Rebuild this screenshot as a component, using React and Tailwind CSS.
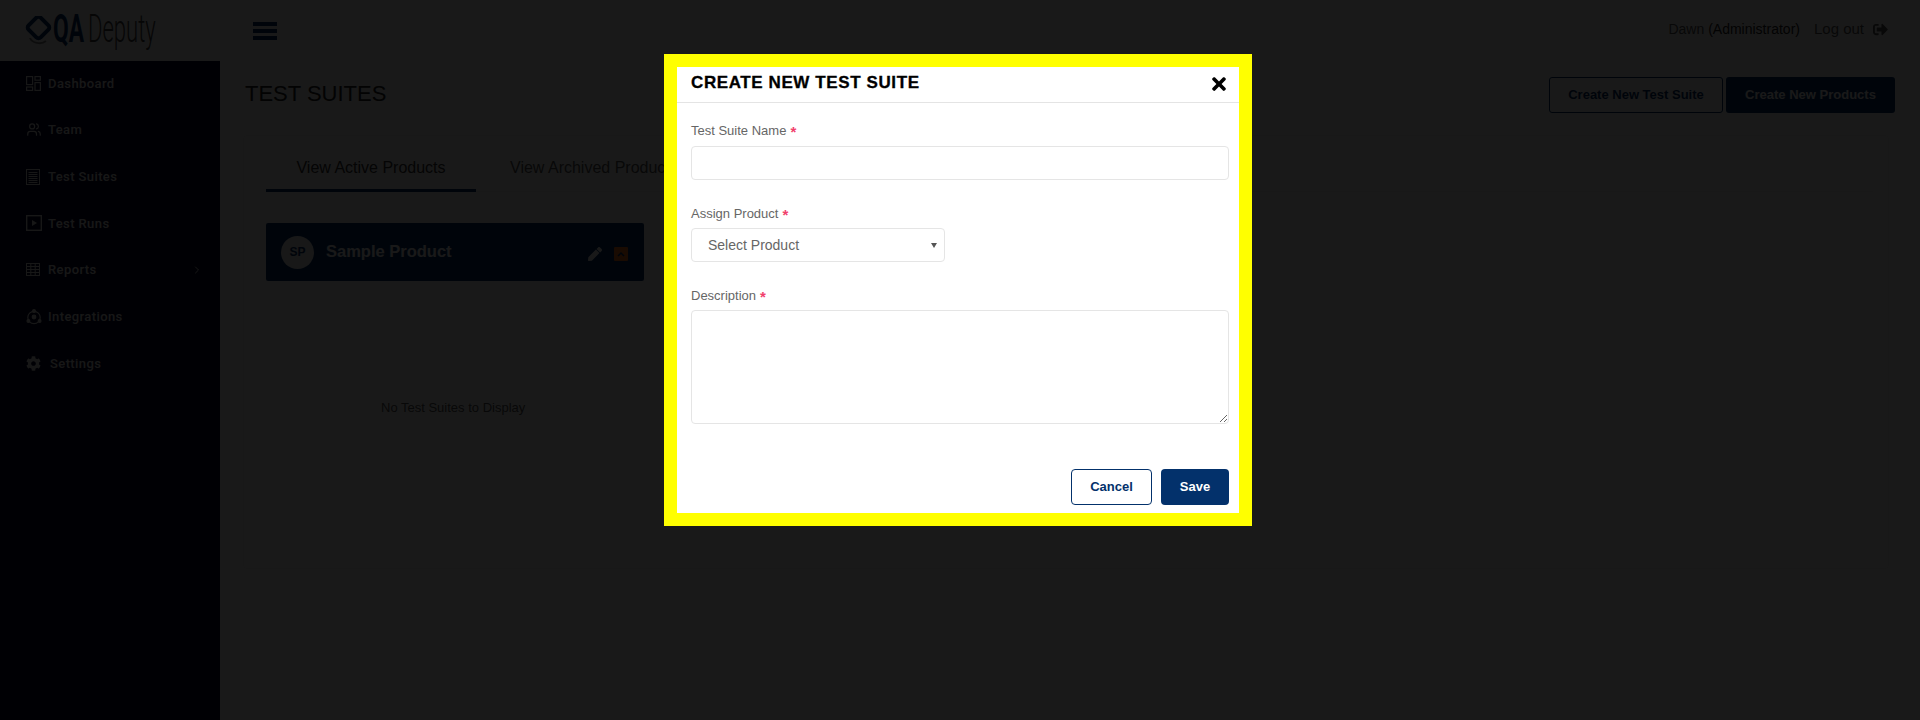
import React from "react";
import { Users, ChevronRight } from "lucide-react";
import { FaCog, FaPen, FaTimes, FaSignOutAlt } from "react-icons/fa";

const sans = "font-['Liberation_Sans',Arial,sans-serif]";

function DashIcon() {
  return (
    <svg viewBox="0 0 15 15" className="w-[15px] h-[15px]" fill="none" stroke="currentColor" strokeWidth="1.2">
      <rect x="0.6" y="0.6" width="6" height="8" />
      <rect x="9" y="0.6" width="5.4" height="3.6" />
      <rect x="0.6" y="11" width="6" height="3.4" />
      <rect x="9" y="6.6" width="5.4" height="7.8" />
    </svg>
  );
}
function DocIcon() {
  return (
    <svg viewBox="0 0 14 16" className="w-[14px] h-[16px]" fill="none" stroke="currentColor" strokeWidth="1">
      <rect x="0.5" y="0.5" width="13" height="15" />
      <path d="M2.5 3.5h9M2.5 5.5h9M2.5 7.5h9M2.5 9.5h9M2.5 11.5h9M2.5 13.5h9" />
    </svg>
  );
}
function PlayIcon() {
  return (
    <svg viewBox="0 0 16 16" className="w-[16px] h-[16px]" fill="none" stroke="currentColor" strokeWidth="1.4">
      <rect x="0.7" y="0.7" width="14.6" height="14.6" />
      <path d="M6 5l5 3-5 3z" fill="currentColor" stroke="none" />
    </svg>
  );
}
function GridIcon() {
  return (
    <svg viewBox="0 0 14 13" className="w-[14px] h-[13px]" fill="none" stroke="currentColor" strokeWidth="1">
      <rect x="0.5" y="0.5" width="13" height="12" />
      <path d="M0 3.5h14M0 6.5h14M0 9.5h14M4.8 0v13M9.2 0v13" />
    </svg>
  );
}
function IntegrationsIcon() {
  return (
    <svg viewBox="0 0 16 16" className="w-4 h-4" fill="none" stroke="currentColor" strokeWidth="1.2">
      <circle cx="8" cy="8.5" r="6.2" />
      <circle cx="8" cy="8" r="1.8" fill="currentColor" />
      <circle cx="8" cy="2" r="1.4" fill="currentColor" />
      <circle cx="2.4" cy="12" r="1.4" fill="currentColor" />
      <circle cx="13.6" cy="12" r="1.4" fill="currentColor" />
    </svg>
  );
}

const items = [
  ["Dashboard", <DashIcon />],
  ["Team", <Users className="w-[17px] h-[15px]" />],
  ["Test Suites", <DocIcon />],
  ["Test Runs", <PlayIcon />],
  ["Reports", <GridIcon />],
  ["Integrations", <IntegrationsIcon />],
  ["Settings", <FaCog className="w-[15px] h-[15px]" />],
];

function Req() {
  return <span className="inline-block translate-y-[2px] text-[#f1416c] font-bold ml-1 text-[15px] leading-[0]">*</span>;
}

function Label({ children }) {
  return (
    <label className={`block h-[16px] text-[13px] leading-[16px] text-[#666] ${sans}`}>
      {children}
      <Req />
    </label>
  );
}

export default function App() {
  return (
    <div className={`relative w-full h-[720px] overflow-hidden bg-white ${sans}`}>
      <header className="h-[61px] flex items-center">
        <div className="w-[220px] pl-[25px] flex items-center">
          <svg viewBox="0 0 28 30" className="w-[28px] h-[30px] text-[#03316b]" fill="none" strokeWidth="4">
            <rect x="5" y="3" width="17" height="17" rx="3" transform="rotate(45 13.5 11.5)" stroke="currentColor" />
            <path d="M5 22c2 5 11 7 16 3" stroke="#888" strokeWidth="2" />
          </svg>
          <span className="mb-[3px] text-[38px] leading-none font-bold text-[#03316b] font-['Roboto',sans-serif] w-[33px] origin-left scale-x-[0.6]">QA</span>
          <span className="mb-[3px] ml-[2px] text-[38px] leading-none font-light text-[#444] font-['Roboto',sans-serif] origin-left scale-x-[0.58]">Deputy</span>
        </div>
        <div className="ml-[33px] flex flex-col gap-[3px] w-[24px]">
          <span className="h-[4px] bg-[#03316b]" />
          <span className="h-[4px] bg-[#03316b]" />
          <span className="h-[4px] bg-[#03316b]" />
        </div>
        <div className="ml-auto mr-[32px] mb-[2px] flex items-center text-[14px] text-[#555]">
          <span>Dawn <span className="text-[#222]">(Administrator)</span></span>
          <span className="ml-[14px] text-[15px]">Log out</span>
          <FaSignOutAlt className="ml-[9px] w-[15px] h-[15px]" />
        </div>
      </header>
      <div className="flex h-[659px]">
        <aside className="w-[220px] shrink-0 bg-[#00002a] text-[#e8e8e8]">
          {items.map(([name, icon]) => (
            <div key={name} className="h-[46.67px] pl-[26px] pr-[17px] pb-[2px] flex items-center gap-[6px] text-[13px] font-medium tracking-[0.4px] font-['Roboto',sans-serif]">
              <span className="w-[16px] flex justify-start">{icon}</span>
              <span className={name === "Settings" ? "ml-[2px]" : ""}>{name}</span>
              {name === "Reports" && <ChevronRight className="ml-auto w-[12px] h-[12px]" />}
            </div>
          ))}
        </aside>
        <main className="flex-1 pl-[25px] pr-[25px] bg-[#fdfdfd]">
          <div className="flex items-center justify-between h-[52px] pt-[4px] mt-[6px]">
            <h1 className="text-[22px] leading-none text-[#222] mb-[2px]">TEST SUITES</h1>
            <div className="flex gap-[3px] text-[13px] font-bold">
              <button className="w-[174px] h-[36px] rounded-[3px] border border-[#03316b] text-[#03316b]">Create New Test Suite</button>
              <button className="w-[169px] h-[36px] rounded-[3px] bg-[#03316b] text-white">Create New Products</button>
            </div>
          </div>
          <section className="mt-[16px] h-[434px] border border-[#f2f2f2] rounded-[4px] bg-white pl-[22px] pr-[15px] pt-[14px] ml-[-2px] mr-[6px]">
            <div className="flex border-b border-[#eee] h-[42px] text-[16px] text-[#555]">
              <div className="w-[210px] text-center pt-[6px] border-b-[3px] border-[#03316b] h-[42px] text-[#333]">View Active Products</div>
              <div className="ml-[34px] pt-[6px]">View Archived Products</div>
            </div>
            <div className="mt-[31px] w-[378px] h-[58px] rounded-[2px] bg-[#03316b] flex items-center pl-[15px] pr-[16px] text-white">
              <div className="w-[33px] h-[33px] rounded-full bg-[#eee] text-[#03316b] text-[12px] font-bold flex items-center justify-center">SP</div>
              <span className="ml-[12px] text-[16.5px] font-bold mb-[2px]">Sample Product</span>
              <FaPen className="ml-auto w-[14px] h-[14px] mt-[3px]" />
              <span className="ml-[12px] w-[14px] h-[14px] mt-[3px] bg-[#f97316] rounded-[1px] flex items-center justify-center">
                <svg viewBox="0 0 10 10" className="w-[10px] h-[10px] text-[#03316b]" fill="none" stroke="currentColor" strokeWidth="1.5"><path d="M2 7l3-3 3 3" /></svg>
              </span>
            </div>
            <p className="mt-[117px] ml-[115px] text-[13px] text-[#555]">No Test Suites to Display</p>
          </section>
        </main>
      </div>

      <div className="fixed inset-0 bg-black/90 flex justify-center items-start pt-[54px]">
        <div className="mr-[4px] w-[588px] h-[472px] border-[13px] border-[#ffff00] bg-white flex flex-col">
          <div className="h-[36px] shrink-0 border-b border-[#e4e4e4] pl-[14px] pr-[10px] flex items-start justify-between">
            <h2 className="text-[17px] leading-[18px] mt-[7px] font-bold text-black tracking-[0.6px] [-webkit-text-stroke:0.3px_black]">CREATE NEW TEST SUITE</h2>
            <FaTimes className="w-[20px] h-[20px] mt-[7px] text-black" />
          </div>
          <form className="flex-1 pl-[14px] pr-[10px] flex flex-col">
            <div className="mt-[20px]"><Label>Test Suite Name</Label></div>
            <input className="mt-[7px] h-[34px] w-full rounded-[4px] border border-[#e5e5e5] bg-white" />
            <div className="mt-[26px]"><Label>Assign Product</Label></div>
            <div className="relative mt-[6px] w-[254px] h-[34px]">
              <select className="appearance-none w-full h-full rounded-[4px] border border-[#e5e5e5] bg-white pl-[16px] text-[14px] text-[#666]">
                <option>Select Product</option>
              </select>
              <svg viewBox="0 0 6 6" className="absolute right-[8px] top-[14px] w-[6px] h-[6px] text-[#555]"><path d="M0 1h6L3 6z" fill="currentColor" /></svg>
            </div>
            <div className="mt-[26px]"><Label>Description</Label></div>
            <textarea className="mt-[6px] h-[114px] w-full rounded-[4px] border border-[#e5e5e5] bg-white" />
            <div className="mt-[45px] flex justify-end gap-[9px] text-[13px] font-bold">
              <button type="button" className="w-[81px] h-[36px] rounded-[4px] border border-[#03316b] text-[#03316b]">Cancel</button>
              <button type="button" className="w-[68px] h-[36px] rounded-[4px] bg-[#03316b] text-white">Save</button>
            </div>
          </form>
        </div>
      </div>
    </div>
  );
}
